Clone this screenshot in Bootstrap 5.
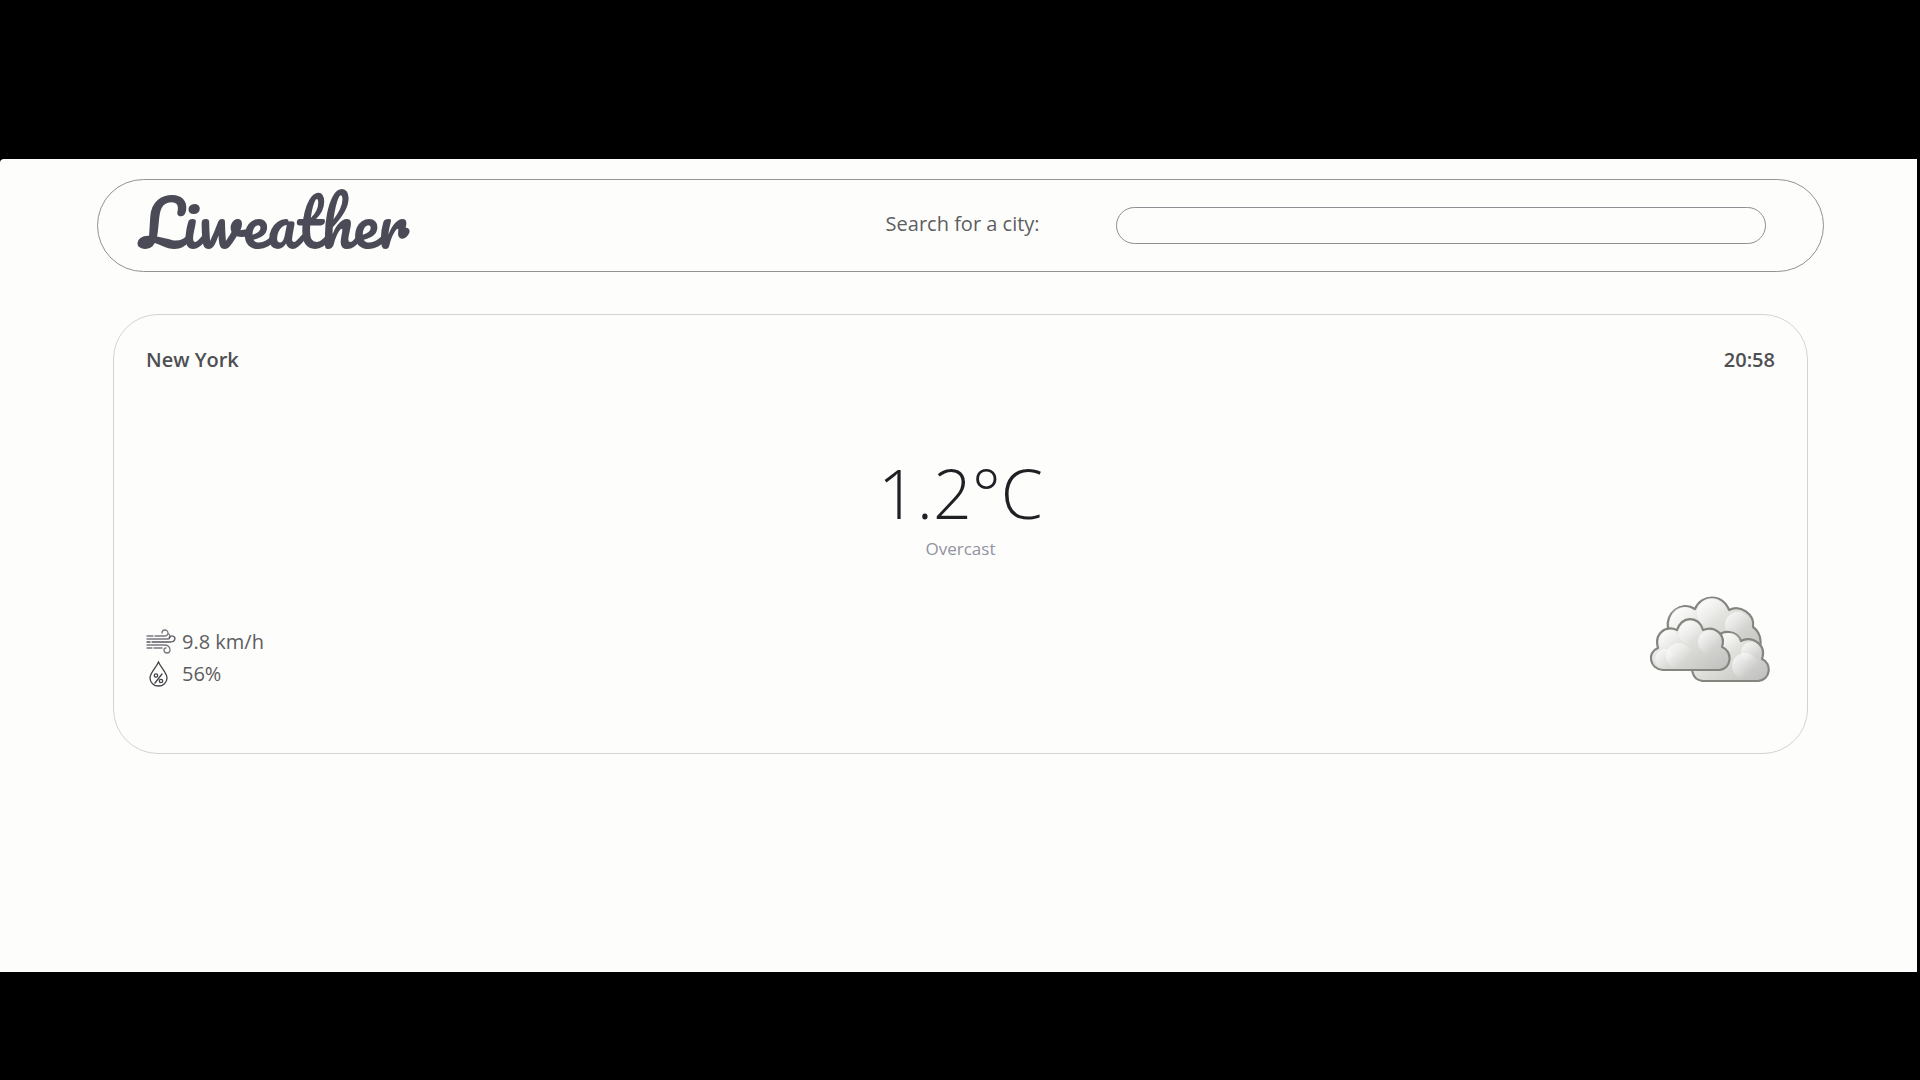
<!DOCTYPE html>
<html lang="en">
<head>
<meta charset="utf-8">
<meta name="viewport" content="width=device-width, initial-scale=1">
<title>Liweather</title>
<link href="https://cdn.jsdelivr.net/npm/bootstrap@5.3.0/dist/css/bootstrap.min.css" rel="stylesheet">
<style>
  body { background: #000; padding: 159px 3px 108px 0; font-family: "Open Sans", "Noto Sans", sans-serif; font-size: 20px; line-height: 32px; color: #5d5e61; }
  .app-shell { background: #fdfdfc; border-top-left-radius: 4px; padding: 20px 93px 20px 97px; }
  .search-bar { border: 1px solid #92928f; border-radius: 47px; height: 93px; padding: 0 57px 0 42px; }
  .brand-name { font-family: "Pacifico", "Lato", sans-serif; font-weight: 400; font-size: 63px; line-height: 72px; color: #4a4b57; padding-bottom: 6px; }
  .search-label { width: 230px; padding-bottom: 4px; }
  .city-input { width: 40%; height: 37px; border: 1px solid #8f8f93; border-radius: 19px; background: transparent; padding: 0 16px; color: inherit; }
  .weather-card { border: 1px solid #d4d4cc; border-radius: 45px; min-height: 440px; margin: 42px 16px 0; padding: 29px 32px 63px; }
  .place-line { font-weight: 600; color: #4e4f52; }
  .temp-block { padding-top: 38px; }
  .temp-value { font-weight: 300; font-size: 68px; line-height: 88px; color: #1f2023; }
  .temp-note { font-size: 17px; line-height: 24px; color: #92939f; }
  .stat-icon { width: 31px; height: 26px; margin-right: 5px; }
  .cloud-art { width: 121px; height: 86px; margin: 0 4px 8px 0; }
</style>
</head>
<body class="min-vh-100 d-flex flex-column">
<div class="app-shell flex-grow-1">
  <header>
    <form class="search-bar d-flex align-items-center">
      <a href="#" class="brand-name text-decoration-none me-auto">Liweather</a>
      <label for="city" class="search-label">Search for a city:</label>
      <input id="city" type="text" class="city-input" autocomplete="off">
    </form>
  </header>
  <main class="weather-card d-flex flex-column justify-content-between">
    <div class="place-line d-flex justify-content-between">
      <span>New York</span>
      <time>20:58</time>
    </div>
    <div class="temp-block text-center">
      <div class="temp-value">1.2°C</div>
      <div class="temp-note">Overcast</div>
    </div>
    <div class="d-flex justify-content-between align-items-end">
      <div>
        <div class="d-flex align-items-center">
          <svg class="stat-icon" viewBox="0 0 31 26" fill="none" stroke="#77787f" stroke-width="1.3" stroke-linecap="round" aria-hidden="true">
            <path d="M1 7h6M9 7h9c3 0 4-1 4-3a3 3 0 0 0-6 0M1 10h21c2 0 3-2 1-5"/>
            <path d="M1 13h3M6 13h18c3 0 5-1 5-4a3.200 3.200 0 0 0-6 0" stroke="#55565e"/>
            <path d="M1 16h17c4 0 6 2 6 5a3 3 0 0 1-6 0c0-1 1-2 2-2M1 19h5M8 19h8"/>
          </svg>
          <span>9.8 km/h</span>
        </div>
        <div class="d-flex align-items-center">
          <svg class="stat-icon" viewBox="0 0 31 26" fill="none" stroke="#414248" stroke-width="1.300" stroke-linecap="round" aria-hidden="true">
            <path d="M12.500 1C10 7 4 12 4 17a8.500 8 0 0 0 17 0c0-5-6-10-8.500-16z"/>
            <path d="M16 13l-7 9"/>
            <circle cx="10" cy="14.500" r="1.700"/><circle cx="15" cy="20" r="1.700"/>
          </svg>
          <span>56%</span>
        </div>
      </div>
      <svg class="cloud-art" viewBox="0 0 121 86" stroke="#858580" stroke-width="2.200" stroke-linejoin="round" role="img" aria-label="Overcast clouds">
        <defs>
          <linearGradient id="cloudFill" x1="0" y1="0" x2="1" y2="1">
            <stop offset="0.100" stop-color="#f8f8f6"/><stop offset="0.500" stop-color="#dededb"/><stop offset="1" stop-color="#bdbdbb"/>
          </linearGradient>
          <linearGradient id="puffShine" x1="0" y1="0" x2="1" y2="1">
            <stop offset="0" stop-color="#fff" stop-opacity="0.800"/><stop offset="0.700" stop-color="#fff" stop-opacity="0"/>
          </linearGradient>
        </defs>
        <path fill="url(#cloudFill)" d="M18 32C15 18 31 4 45 13C51-2 73-3 79 14C90 8 105 18 103 31C110 36 112 45 110 52L90 62H30L16 45Z"/>
        <g fill="url(#puffShine)" stroke="none">
          <circle cx="34" cy="25" r="14"/><circle cx="62" cy="17" r="15"/><circle cx="88" cy="29" r="13"/>
        </g>
        <path fill="url(#cloudFill)" d="M53 85C41 84 39 69 47 65L66 42C72 33 87 34 91 45C101 39 117 48 112 63C122 67 121 84 108 85Z"/>
        <g fill="url(#puffShine)" stroke="none">
          <circle cx="80" cy="49" r="12"/><circle cx="101" cy="56" r="10"/><circle cx="95" cy="70" r="13"/>
        </g>
        <path fill="url(#cloudFill)" d="M13 74C-1 73-3 56 8 52C4 38 15 29 27 34C32 20 48 19 53 34C65 29 76 39 72 51C83 55 82 73 69 74Z"/>
        <g fill="url(#puffShine)" stroke="none">
          <circle cx="20" cy="45" r="11"/><circle cx="41" cy="37" r="12"/><circle cx="60" cy="46" r="12"/><circle cx="29" cy="60" r="13"/><circle cx="15" cy="63" r="10"/>
        </g>
      </svg>
    </div>
  </main>
</div>
<script src="https://cdn.jsdelivr.net/npm/bootstrap@5.3.0/dist/js/bootstrap.bundle.min.js"></script>
</body>
</html>
